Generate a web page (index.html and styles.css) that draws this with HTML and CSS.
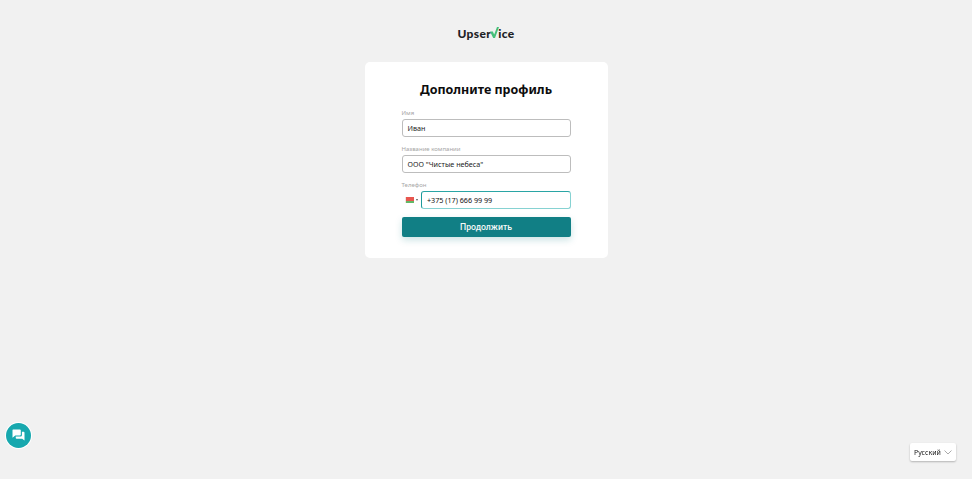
FILE: index.html
```html
<!DOCTYPE html>
<html lang="ru">
<head>
<meta charset="utf-8">
<title>Upservice</title>
<link rel="stylesheet" href="styles.css">
</head>
<body>
<main class="page">
  <div class="logo">
    <span>Upser</span><svg class="logo-check" width="9" height="11" viewBox="0 0 9 11"><path d="M0 4.5 L2.8 4.5 L4.2 7.5 L7 0 L9 0 L5 11 L3.2 11 Z" fill="#46c07a"/></svg><span>ice</span>
  </div>
  <section class="card">
    <h1 class="title">Дополните профиль</h1>
    <form class="form">
      <div class="field">
        <label class="label">Имя</label>
        <div class="input">Иван</div>
      </div>
      <div class="field">
        <label class="label">Название компании</label>
        <div class="input">ООО "Чистые небеса"</div>
      </div>
      <div class="field">
        <label class="label">Телефон</label>
        <div class="phone">
          <div class="flag-select">
            <span class="flag"><span class="flag-band"></span></span>
            <span class="caret"></span>
          </div>
          <div class="input input-active">+375 (17) 666 99 99</div>
        </div>
      </div>
      <div class="submit">Продолжить</div>
    </form>
  </section>
</main>
<div class="chat">
  <svg width="13" height="12" viewBox="0 0 14 13"><path d="M1 0.5h7.5a1 1 0 0 1 1 1v4.5a1 1 0 0 1-1 1H3.5L0.5 9.5V1a.5.5 0 0 1 .5-.5z" fill="#fff"/><path d="M10.7 3H12.5a1 1 0 0 1 1 1v8.5L11 10.5H5a1 1 0 0 1-1-1V8.2h5.2a1.5 1.5 0 0 0 1.5-1.5z" fill="#fff"/></svg>
</div>
<div class="lang">
  <span>Русский</span>
  <svg width="8" height="5" viewBox="0 0 8 5"><path d="M0.5 0.5 L4 4 L7.5 0.5" fill="none" stroke="#aaa" stroke-width="1"/></svg>
</div>
</body>
</html>
```
FILE: styles.css
```css
* { box-sizing: border-box; }
html, body { margin: 0; height: 100%; }
body {
  background: #f1f1f1;
  font-family: "Noto Sans", "Open Sans", sans-serif;
  color: #111;
  overflow: hidden;
}
.page {
  display: flex;
  flex-direction: column;
  align-items: center;
  padding-top: 25px;
}
.logo {
  display: flex;
  align-items: center;
  height: 16px;
  font-family: "Lato", "Noto Sans", sans-serif;
  font-weight: 900;
  font-size: 12px;
  letter-spacing: 0.38px;
  color: #1d2226;
}
.logo-check { margin: -2px -1px 0 -1px; }
.card {
  margin-top: 21px;
  width: 243px;
  height: 195.5px;
  background: #fff;
  border-radius: 5px;
  padding: 19px 37px 0 37px;
}
.title {
  margin: 0 0 9.5px;
  text-align: center;
  font-size: 12.5px;
  line-height: 18px;
  font-weight: 700;
  color: #0c0c0c;
}
.form { display: flex; flex-direction: column; }
.field { display: flex; flex-direction: column; margin-bottom: 7.5px; }
.label {
  font-size: 6px;
  line-height: 8px;
  margin-bottom: 2px;
  color: #a6a6a6;
}
.input {
  flex: 1;
  height: 18.5px;
  border: 1px solid #bdbdbd;
  border-radius: 3px;
  background: #fff;
  padding: 0 5px;
  font-size: 7.2px;
  line-height: 16.5px;
  color: #222;
}
.input-active {
  border-color: #86d2d2;
  border-top-color: #2aa5a5;
  border-left-color: #1d9a9a;
  color: #111;
}
.phone { display: flex; align-items: center; }
.flag-select {
  width: 19.5px;
  display: flex;
  align-items: center;
  padding-left: 3.5px;
  gap: 2px;
}
.flag {
  display: flex;
  width: 8.5px;
  height: 5.5px;
  background: linear-gradient(#e8564f 0 62%, #62b866 62%);
}
.flag-band { width: 1px; height: 100%; background: #f3e4e0; }
.caret {
  width: 0;
  height: 0;
  border-left: 1.5px solid transparent;
  border-right: 1.5px solid transparent;
  border-top: 2px solid #555;
}
.submit {
  height: 20px;
  background: #117f85;
  border-radius: 2px;
  color: #f4f8f8;
  text-align: center;
  font-family: "Roboto", "Noto Sans", sans-serif;
  font-weight: 500;
  font-size: 8.7px;
  line-height: 20px;
  box-shadow: 0 3px 7px rgba(17, 127, 133, 0.22);
}
.chat {
  position: fixed;
  left: 5.5px;
  top: 422.5px;
  width: 25px;
  height: 25px;
  border-radius: 50%;
  background: #17a8ae;
  display: flex;
  align-items: center;
  justify-content: center;
  box-shadow: 0 0 0 1px #fff;
}
.lang {
  position: fixed;
  left: 910px;
  top: 443px;
  width: 46px;
  height: 18px;
  background: #fff;
  border-radius: 2px;
  box-shadow: 0 1px 2px rgba(0, 0, 0, 0.25);
  display: flex;
  align-items: center;
  gap: 3px;
  padding-left: 4px;
  font-size: 7px;
  color: #222;
}
```
